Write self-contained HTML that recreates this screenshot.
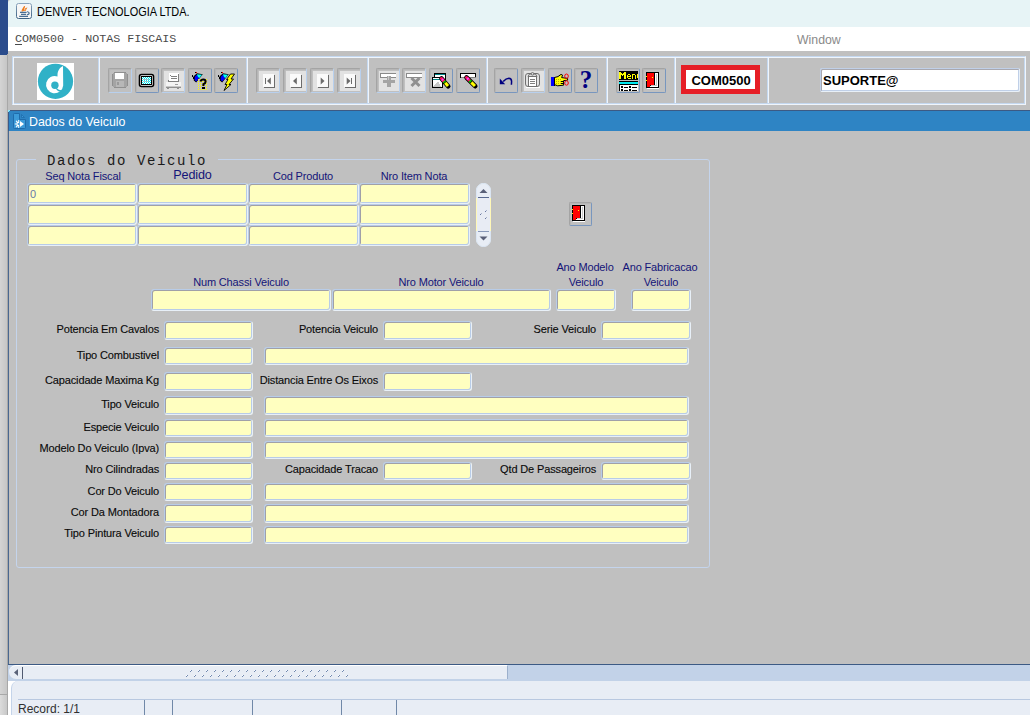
<!DOCTYPE html><html><head><meta charset="utf-8"><title>COM0500</title><style>
*{margin:0;padding:0;box-sizing:content-box}
html,body{width:1030px;height:715px;overflow:hidden;background:#c0c0c0}
body{position:relative;font-family:"Liberation Sans",sans-serif}
.t{position:absolute;white-space:nowrap;line-height:1}
.r{position:absolute}
.f{position:absolute;background:#ffffc0;border:1px solid;border-color:#b8cce8 #e8f0f8 #e8f0f8 #b8cce8;box-shadow:inset 1px 1px 0 #a0a0a8, inset -1px -1px 0 #b8cce8;border-radius:3px}
.b{position:absolute;border:1px solid;border-radius:2px;background:#c0c0c0;box-shadow:inset 1px 1px 0 #b6b6b6}
svg{position:absolute;display:block;overflow:visible}
</style></head><body>
<div class="r" style="left:0px;top:0px;width:8px;height:55px;background:#2b4c8c"></div>
<div class="r" style="left:0px;top:55px;width:7px;height:639px;background:linear-gradient(90deg,#d4d4d4,#c6c6c6)"></div>
<div class="r" style="left:0px;top:694px;width:7px;height:1px;background:#a8a8a8"></div>
<div class="r" style="left:0px;top:695px;width:7px;height:20px;background:linear-gradient(90deg,#dcdcdc,#c8c8c8)"></div>
<div class="r" style="left:7px;top:54px;width:1px;height:661px;background:#a8a8a8"></div>
<div class="r" style="left:8px;top:0px;width:1022px;height:27px;background:#e7f4f6;border-top-left-radius:3px"></div>
<svg style="left:16px;top:3px" width="16" height="16" viewBox="0 0 16 16"><defs><linearGradient id="jg" x1="0" y1="0" x2="0" y2="1"><stop offset="0" stop-color="#8aa4bc"/><stop offset="1" stop-color="#3e6284"/></linearGradient></defs><rect x="0.5" y="0.5" width="15" height="15" rx="2" fill="#f6f6f6" stroke="url(#jg)"/><path d="M6.2 8.6 C5.6 6.8 7.2 5.2 8.6 3.2 C8.4 5 6.8 6.4 7.4 8.2" stroke="#ee7a1a" stroke-width="1.1" fill="none"/><path d="M8.2 8 C8 6.8 9.6 6 10.6 4.8 C10.4 6.2 9.2 6.8 9 8" stroke="#ee7a1a" stroke-width="1" fill="none"/><path d="M4 9.4 H10.6 M5 11.4 H10 M3.2 13.4 H12" stroke="#4a6e92" stroke-width="1.1"/><path d="M11.2 8.6 Q13.6 9.6 13.2 10.6 Q12.6 11.6 10.8 11.8" stroke="#4a6e92" stroke-width="1.1" fill="none"/></svg>
<div class="t" style="left:37px;top:5.84px;font-size:12px;color:#000;font-family:'Liberation Sans', sans-serif;font-weight:normal;transform:scaleX(0.91);transform-origin:0 0">DENVER TECNOLOGIA LTDA.</div>
<div class="r" style="left:8px;top:27px;width:1022px;height:24px;background:#ffffff"></div>
<div class="t" style="left:15px;top:34.03px;font-size:11.7px;color:#4a4a4a;font-family:'Liberation Mono', monospace;font-weight:normal;"><span style="text-decoration:underline;text-underline-offset:2px">C</span>OM0500 - NOTAS FISCAIS</div>
<div class="t" style="left:797px;top:33.89px;font-size:12.3px;color:#8a8a8a;font-family:'Liberation Sans', sans-serif;font-weight:normal;">Window</div>
<div class="r" style="left:8px;top:51px;width:1022px;height:59px;background:#c0c0c0"></div>
<div class="r" style="left:12px;top:56px;width:1012px;height:47px;border:1px solid;border-color:#c4d8f0 #f0f5fb #f0f5fb #c4d8f0;box-shadow:inset 1px 1px 0 #f0f5fb, inset -1px -1px 0 #c4d8f0"></div>
<div class="r" style="left:98px;top:58px;width:1px;height:45px;background:#c4d8f0"></div>
<div class="r" style="left:99px;top:58px;width:1px;height:45px;background:#f0f5fb"></div>
<div class="r" style="left:246px;top:58px;width:1px;height:45px;background:#c4d8f0"></div>
<div class="r" style="left:247px;top:58px;width:1px;height:45px;background:#f0f5fb"></div>
<div class="r" style="left:367px;top:58px;width:1px;height:45px;background:#c4d8f0"></div>
<div class="r" style="left:368px;top:58px;width:1px;height:45px;background:#f0f5fb"></div>
<div class="r" style="left:486px;top:58px;width:1px;height:45px;background:#c4d8f0"></div>
<div class="r" style="left:487px;top:58px;width:1px;height:45px;background:#f0f5fb"></div>
<div class="r" style="left:606px;top:58px;width:1px;height:45px;background:#c4d8f0"></div>
<div class="r" style="left:607px;top:58px;width:1px;height:45px;background:#f0f5fb"></div>
<div class="r" style="left:674px;top:58px;width:1px;height:45px;background:#c4d8f0"></div>
<div class="r" style="left:675px;top:58px;width:1px;height:45px;background:#f0f5fb"></div>
<div class="r" style="left:767px;top:58px;width:1px;height:45px;background:#c4d8f0"></div>
<div class="r" style="left:768px;top:58px;width:1px;height:45px;background:#f0f5fb"></div>
<svg style="left:37px;top:63px" width="37" height="37" viewBox="0 0 37 37"><rect width="37" height="37" fill="#fff"/><circle cx="18.5" cy="18.3" r="17.6" fill="#30b1c7"/><path d="M26 3 C22.5 4.5 20.5 8 20.5 12.5 L20.5 13.6 A8.6 8.6 0 1 0 26.2 22.5 Z" fill="#fff"/><circle cx="17.9" cy="22.2" r="3.7" fill="#30b1c7"/><path d="M19.5 25 Q22 27.5 25 27.2 L23.5 29 Q20.5 28.5 18.5 25.6 Z" fill="#30b1c7"/></svg>
<div class="b" style="left:108px;top:68px;width:22px;height:23px;border-color:#a4a4a4 #b8d0ee #b8d0ee #a4a4a4"></div>
<svg style="left:112px;top:72px" width="16" height="16" viewBox="0 0 16 16" shape-rendering="crispEdges"><rect x="1" y="1" width="14" height="14" fill="#a4a4a4"/><rect x="3" y="1" width="9" height="6" fill="#ffffff"/><rect x="2" y="0" width="12" height="1" fill="#909090"/><rect x="4" y="9" width="8" height="6" fill="#b8b8b8"/><rect x="5" y="10" width="2" height="3" fill="#9a9a9a"/><rect x="0" y="2" width="1" height="12" fill="#909090"/><rect x="15" y="2" width="1" height="12" fill="#909090"/><rect x="2" y="15" width="12" height="1" fill="#909090"/></svg>
<div class="b" style="left:135px;top:68px;width:22px;height:23px;border-color:#a4a4a4 #7896be #7896be #a4a4a4"></div>
<svg style="left:139px;top:72px" width="16" height="16" viewBox="0 0 16 16" shape-rendering="crispEdges"><rect x="0.5" y="2.5" width="14" height="12" rx="2" fill="#fff" stroke="#000" stroke-width="1.6" shape-rendering="auto"/><rect x="2" y="4" width="11" height="9" fill="#000"/><rect x="3" y="5" width="9" height="7" fill="#00e8f0"/><rect x="3" y="5" width="1" height="1" fill="#ffffff"/><rect x="3" y="7" width="1" height="1" fill="#ffffff"/><rect x="3" y="9" width="1" height="1" fill="#ffffff"/><rect x="3" y="11" width="1" height="1" fill="#ffffff"/><rect x="4" y="6" width="1" height="1" fill="#ffffff"/><rect x="4" y="8" width="1" height="1" fill="#ffffff"/><rect x="4" y="10" width="1" height="1" fill="#ffffff"/><rect x="5" y="5" width="1" height="1" fill="#ffffff"/><rect x="5" y="7" width="1" height="1" fill="#ffffff"/><rect x="5" y="9" width="1" height="1" fill="#ffffff"/><rect x="5" y="11" width="1" height="1" fill="#ffffff"/><rect x="6" y="6" width="1" height="1" fill="#ffffff"/><rect x="6" y="8" width="1" height="1" fill="#ffffff"/><rect x="6" y="10" width="1" height="1" fill="#ffffff"/><rect x="7" y="5" width="1" height="1" fill="#ffffff"/><rect x="7" y="7" width="1" height="1" fill="#ffffff"/><rect x="7" y="9" width="1" height="1" fill="#ffffff"/><rect x="7" y="11" width="1" height="1" fill="#ffffff"/><rect x="8" y="6" width="1" height="1" fill="#ffffff"/><rect x="8" y="8" width="1" height="1" fill="#ffffff"/><rect x="8" y="10" width="1" height="1" fill="#ffffff"/><rect x="9" y="5" width="1" height="1" fill="#ffffff"/><rect x="9" y="7" width="1" height="1" fill="#ffffff"/><rect x="9" y="9" width="1" height="1" fill="#ffffff"/><rect x="9" y="11" width="1" height="1" fill="#ffffff"/><rect x="10" y="6" width="1" height="1" fill="#ffffff"/><rect x="10" y="8" width="1" height="1" fill="#ffffff"/><rect x="10" y="10" width="1" height="1" fill="#ffffff"/><rect x="11" y="5" width="1" height="1" fill="#ffffff"/><rect x="11" y="7" width="1" height="1" fill="#ffffff"/><rect x="11" y="9" width="1" height="1" fill="#ffffff"/><rect x="11" y="11" width="1" height="1" fill="#ffffff"/><rect x="4" y="7" width="6" height="1" fill="#a0c8d0"/><rect x="4" y="9" width="6" height="1" fill="#a0c8d0"/></svg>
<div class="b" style="left:161px;top:68px;width:22px;height:23px;border-color:#a4a4a4 #b8d0ee #b8d0ee #a4a4a4"></div>
<div class="r" style="left:164px;top:71px;width:20px;height:20px;background:#e2e2e2"></div>
<svg style="left:165px;top:72px" width="16" height="16" viewBox="0 0 16 16" shape-rendering="crispEdges"><rect x="4" y="1" width="10" height="8" fill="#ffffff"/><rect x="13" y="2" width="1" height="7" fill="#808080"/><rect x="5" y="3" width="1" height="1" fill="#808080"/><rect x="6" y="4" width="6" height="1" fill="#808080"/><rect x="6" y="6" width="6" height="1" fill="#808080"/><rect x="3" y="8" width="1" height="1" fill="#808080"/><rect x="3" y="9" width="11" height="1" fill="#808080"/><rect x="1" y="10" width="15" height="5" fill="#f4f4f4"/><rect x="1" y="14" width="15" height="1" fill="#c8c8c8"/><rect x="1" y="15" width="15" height="1" fill="#909090"/><rect x="2" y="16" width="2" height="1" fill="#909090"/><rect x="12" y="16" width="2" height="1" fill="#909090"/><rect x="10" y="12" width="3" height="1" fill="#a0a0a0"/></svg>
<div class="b" style="left:188px;top:68px;width:22px;height:23px;border-color:#a4a4a4 #7896be #7896be #a4a4a4"></div>
<svg style="left:192px;top:72px" width="16" height="16" viewBox="0 0 16 16" shape-rendering="crispEdges"><path d="M1.6 4.2 L5 1.2 L10.8 2.2 L4.2 10.6 L1.8 8.4 Z" fill="#000" shape-rendering="auto"/><path d="M2.8 4.8 L5 2.4 L5.4 4 L7.2 6.2 L4.2 9.6 L2.6 8 Z" fill="#0000ff" shape-rendering="auto"/><path d="M5 2.2 L10 2.8 L7.2 6.2 L5.4 4 Z" fill="#00ffff" shape-rendering="auto"/><rect x="0" y="3" width="1" height="2" fill="#000"/><rect x="1" y="5" width="1" height="2" fill="#000"/><rect x="3" y="0" width="2" height="1" fill="#000"/><rect x="4" y="0" width="1" height="1" fill="#ff0000"/><rect x="6" y="7" width="1" height="1" fill="#ffff00"/><rect x="6" y="9" width="1" height="1" fill="#ffff00"/><rect x="6" y="11" width="1" height="1" fill="#ffff00"/><rect x="6" y="13" width="1" height="1" fill="#ffff00"/><rect x="6" y="15" width="1" height="1" fill="#ffff00"/><rect x="6" y="17" width="1" height="1" fill="#ffff00"/><rect x="8" y="7" width="1" height="1" fill="#ffff00"/><rect x="8" y="9" width="1" height="1" fill="#ffff00"/><rect x="8" y="11" width="1" height="1" fill="#ffff00"/><rect x="8" y="13" width="1" height="1" fill="#ffff00"/><rect x="8" y="15" width="1" height="1" fill="#ffff00"/><rect x="8" y="17" width="1" height="1" fill="#ffff00"/><rect x="10" y="7" width="1" height="1" fill="#ffff00"/><rect x="10" y="9" width="1" height="1" fill="#ffff00"/><rect x="10" y="11" width="1" height="1" fill="#ffff00"/><rect x="10" y="13" width="1" height="1" fill="#ffff00"/><rect x="10" y="15" width="1" height="1" fill="#ffff00"/><rect x="10" y="17" width="1" height="1" fill="#ffff00"/><rect x="12" y="7" width="1" height="1" fill="#ffff00"/><rect x="12" y="9" width="1" height="1" fill="#ffff00"/><rect x="12" y="11" width="1" height="1" fill="#ffff00"/><rect x="12" y="13" width="1" height="1" fill="#ffff00"/><rect x="12" y="15" width="1" height="1" fill="#ffff00"/><rect x="12" y="17" width="1" height="1" fill="#ffff00"/><rect x="14" y="7" width="1" height="1" fill="#ffff00"/><rect x="14" y="9" width="1" height="1" fill="#ffff00"/><rect x="14" y="11" width="1" height="1" fill="#ffff00"/><rect x="14" y="13" width="1" height="1" fill="#ffff00"/><rect x="14" y="15" width="1" height="1" fill="#ffff00"/><rect x="14" y="17" width="1" height="1" fill="#ffff00"/><path d="M8.5 9.5 Q9 7.6 11.3 7.6 Q13.6 7.6 13.6 9.8 Q13.6 11.4 11.4 12.2 L11.4 14" stroke="#000" stroke-width="2" fill="none" shape-rendering="auto"/><rect x="10" y="15" width="3" height="2" fill="#000"/></svg>
<div class="b" style="left:214px;top:68px;width:22px;height:23px;border-color:#a4a4a4 #7896be #7896be #a4a4a4"></div>
<svg style="left:218px;top:72px" width="16" height="16" viewBox="0 0 16 16" shape-rendering="crispEdges"><path d="M1.6 4.2 L5 1.2 L10.8 2.2 L4.2 10.6 L1.8 8.4 Z" fill="#000" shape-rendering="auto"/><path d="M2.8 4.8 L5 2.4 L5.4 4 L7.2 6.2 L4.2 9.6 L2.6 8 Z" fill="#0000ff" shape-rendering="auto"/><path d="M5 2.2 L10 2.8 L7.2 6.2 L5.4 4 Z" fill="#00ffff" shape-rendering="auto"/><rect x="0" y="3" width="1" height="2" fill="#000"/><rect x="1" y="5" width="1" height="2" fill="#000"/><rect x="3" y="0" width="2" height="1" fill="#000"/><rect x="4" y="0" width="1" height="1" fill="#ff0000"/><path d="M12.5 2 L16.5 2 L13 7 L15.5 7 L11 12.5 L13 12.5 L6 18.5 L9 12.5 L7 12.5 L10 7.5 L8.5 7.5 Z" fill="#ffff00" stroke="#000" stroke-width="0.9" shape-rendering="auto"/></svg>
<div class="b" style="left:256px;top:68px;width:22px;height:23px;border-color:#a4a4a4 #b8d0ee #b8d0ee #a4a4a4"></div>
<div class="r" style="left:259px;top:71px;width:20px;height:20px;background:#e2e2e2"></div>
<svg style="left:260px;top:72px" width="16" height="16" viewBox="0 0 16 16" shape-rendering="crispEdges"><rect x="3" y="2" width="11" height="13" fill="#fafafa"/><rect x="14" y="3" width="1" height="13" fill="#6c6c6c"/><rect x="4" y="15" width="11" height="1" fill="#6c6c6c"/><rect x="5" y="6" width="1" height="6" fill="#6c6c6c"/><path d="M7 9 L10.8 5.6 L10.8 12.4 Z" fill="#6c6c6c" shape-rendering="auto"/></svg>
<div class="b" style="left:283px;top:68px;width:22px;height:23px;border-color:#a4a4a4 #b8d0ee #b8d0ee #a4a4a4"></div>
<div class="r" style="left:286px;top:71px;width:20px;height:20px;background:#e2e2e2"></div>
<svg style="left:287px;top:72px" width="16" height="16" viewBox="0 0 16 16" shape-rendering="crispEdges"><rect x="3" y="2" width="11" height="13" fill="#fafafa"/><rect x="14" y="3" width="1" height="13" fill="#6c6c6c"/><rect x="4" y="15" width="11" height="1" fill="#6c6c6c"/><path d="M6 9 L9.8 5.6 L9.8 12.4 Z" fill="#6c6c6c" shape-rendering="auto"/></svg>
<div class="b" style="left:310px;top:68px;width:22px;height:23px;border-color:#a4a4a4 #b8d0ee #b8d0ee #a4a4a4"></div>
<div class="r" style="left:313px;top:71px;width:20px;height:20px;background:#e2e2e2"></div>
<svg style="left:314px;top:72px" width="16" height="16" viewBox="0 0 16 16" shape-rendering="crispEdges"><rect x="3" y="2" width="11" height="13" fill="#fafafa"/><rect x="14" y="3" width="1" height="13" fill="#6c6c6c"/><rect x="4" y="15" width="11" height="1" fill="#6c6c6c"/><path d="M10.5 9 L6.7 5.6 L6.7 12.4 Z" fill="#6c6c6c" shape-rendering="auto"/></svg>
<div class="b" style="left:337px;top:68px;width:22px;height:23px;border-color:#a4a4a4 #b8d0ee #b8d0ee #a4a4a4"></div>
<div class="r" style="left:340px;top:71px;width:20px;height:20px;background:#e2e2e2"></div>
<svg style="left:341px;top:72px" width="16" height="16" viewBox="0 0 16 16" shape-rendering="crispEdges"><rect x="3" y="2" width="11" height="13" fill="#fafafa"/><rect x="14" y="3" width="1" height="13" fill="#6c6c6c"/><rect x="4" y="15" width="11" height="1" fill="#6c6c6c"/><rect x="10" y="6" width="1" height="6" fill="#6c6c6c"/><path d="M9.5 9 L5.7 5.6 L5.7 12.4 Z" fill="#6c6c6c" shape-rendering="auto"/></svg>
<div class="b" style="left:376px;top:68px;width:22px;height:23px;border-color:#a4a4a4 #b8d0ee #b8d0ee #a4a4a4"></div>
<div class="r" style="left:379px;top:71px;width:20px;height:20px;background:#e2e2e2"></div>
<svg style="left:380px;top:72px" width="16" height="16" viewBox="0 0 16 16" shape-rendering="crispEdges"><rect x="0" y="1" width="16" height="5" fill="#8a8a8a"/><rect x="1" y="2" width="15" height="3" fill="#ffffff"/><rect x="7" y="4" width="4" height="11" fill="#a4a4a4"/><rect x="3" y="8" width="12" height="3" fill="#a4a4a4"/><rect x="8" y="4" width="1" height="4" fill="#c8c8c8"/></svg>
<div class="b" style="left:402px;top:68px;width:22px;height:23px;border-color:#a4a4a4 #b8d0ee #b8d0ee #a4a4a4"></div>
<div class="r" style="left:405px;top:71px;width:20px;height:20px;background:#e2e2e2"></div>
<svg style="left:406px;top:72px" width="16" height="16" viewBox="0 0 16 16" shape-rendering="crispEdges"><rect x="0" y="1" width="16" height="5" fill="#8a8a8a"/><rect x="1" y="2" width="15" height="3" fill="#ffffff"/><path d="M5.5 6 L13.5 14 M13.5 6 L5.5 14" stroke="#909090" stroke-width="3" shape-rendering="auto"/></svg>
<div class="b" style="left:429px;top:68px;width:22px;height:23px;border-color:#a4a4a4 #7896be #7896be #a4a4a4"></div>
<svg style="left:433px;top:72px" width="16" height="16" viewBox="0 0 16 16" shape-rendering="crispEdges"><rect x="1" y="1" width="12" height="11" fill="#000"/><rect x="2" y="2" width="10" height="9" fill="#fff"/><rect x="2" y="2" width="10" height="1" fill="#008888"/><rect x="-1" y="5" width="11" height="11" fill="#000"/><rect x="0" y="6" width="9" height="9" fill="#fff"/><rect x="0" y="7" width="7" height="1" fill="#008888"/><path d="M0 15 L5 9 L8 15 Z" fill="#c8c8c8"/><path d="M8.5 6.5 L15.2 14.2" stroke="#000" stroke-width="4.6" stroke-linecap="round" shape-rendering="auto"/><path d="M8.5 6.5 L10.644 8.964" stroke="#ff1060" stroke-width="3" stroke-linecap="round" shape-rendering="auto"/><path d="M9.036 7.116 L9.974 8.193999999999999" stroke="#ff40ff" stroke-width="2.4" shape-rendering="auto"/><path d="M10.911999999999999 9.272 L11.85 10.35" stroke="#00d000" stroke-width="3" shape-rendering="auto"/><path d="M12.251999999999999 10.812000000000001 L14.998999999999999 13.969" stroke="#ffff00" stroke-width="3" shape-rendering="auto"/></svg>
<div class="b" style="left:456px;top:68px;width:22px;height:23px;border-color:#a4a4a4 #7896be #7896be #a4a4a4"></div>
<svg style="left:460px;top:72px" width="16" height="16" viewBox="0 0 16 16" shape-rendering="crispEdges"><rect x="0" y="1" width="16" height="5" fill="#000"/><rect x="1" y="2" width="14" height="3" fill="#fff"/><rect x="1" y="5" width="15" height="1" fill="#808080"/><path d="M6.5 5.5 L15.2 14.2" stroke="#000" stroke-width="4.6" stroke-linecap="round" shape-rendering="auto"/><path d="M6.5 5.5 L9.283999999999999 8.283999999999999" stroke="#ff1060" stroke-width="3" stroke-linecap="round" shape-rendering="auto"/><path d="M7.196 6.196 L8.414 7.414" stroke="#ff40ff" stroke-width="2.4" shape-rendering="auto"/><path d="M9.632 8.632 L10.85 9.85" stroke="#00d000" stroke-width="3" shape-rendering="auto"/><path d="M11.372 10.372 L14.938999999999998 13.938999999999998" stroke="#ffff00" stroke-width="3" shape-rendering="auto"/></svg>
<div class="b" style="left:494px;top:68px;width:22px;height:23px;border-color:#a4a4a4 #7896be #7896be #a4a4a4"></div>
<svg style="left:498px;top:72px" width="16" height="16" viewBox="0 0 16 16" shape-rendering="crispEdges"><path d="M5.2 9.6 Q8 6.2 10.8 6.2 Q13.6 6.4 13.6 9.4 L13.4 12.8" stroke="#000080" stroke-width="1.5" fill="none" shape-rendering="auto"/><path d="M1.8 6.6 L1.8 12.2 L7.2 12.2 Z" fill="#000080" shape-rendering="auto"/></svg>
<div class="b" style="left:521px;top:68px;width:22px;height:23px;border-color:#a4a4a4 #b8d0ee #b8d0ee #a4a4a4"></div>
<div class="r" style="left:524px;top:71px;width:20px;height:20px;background:#e2e2e2"></div>
<svg style="left:525px;top:72px" width="16" height="16" viewBox="0 0 16 16" shape-rendering="crispEdges"><rect x="0.5" y="1.5" width="14" height="13" rx="2.5" fill="none" stroke="#707070" shape-rendering="auto"/><rect x="3.5" y="4.5" width="8" height="10" fill="#fff" stroke="#707070" shape-rendering="auto"/><path d="M3 4.5 L4.5 2 H10.5 L12 4.5 Z" fill="#dedede" stroke="#707070" shape-rendering="auto"/><circle cx="7.5" cy="1.8" r="1.3" fill="#dedede" stroke="#707070" shape-rendering="auto"/><rect x="5" y="7" width="5" height="1" fill="#808080"/><rect x="5" y="9" width="5" height="1" fill="#808080"/><rect x="5" y="11" width="5" height="1" fill="#808080"/><rect x="1" y="15" width="14" height="1" fill="#ffffff"/></svg>
<div class="b" style="left:548px;top:68px;width:22px;height:23px;border-color:#a4a4a4 #7896be #7896be #a4a4a4"></div>
<svg style="left:552px;top:72px" width="16" height="16" viewBox="0 0 16 16" shape-rendering="crispEdges"><rect x="-1" y="5" width="3" height="9" fill="#0000ff"/><rect x="2" y="5" width="1" height="9" fill="#000"/><path d="M2.5 5.5 L6 4.6 L9 2.4 L10.6 3.2 L9.6 5.6 L15.6 6.4 L15.6 8.2 L11.6 8.6 L11.6 13.2 L5.6 13.8 L2.5 12.6 Z" fill="#ffff00" stroke="#000" stroke-width="1" shape-rendering="auto"/><rect x="8" y="9" width="4" height="1" fill="#000"/><rect x="8" y="11" width="4" height="1" fill="#000"/><rect x="4" y="7" width="1" height="1" fill="#c0b000"/><rect x="4" y="9" width="1" height="1" fill="#c0b000"/><rect x="4" y="11" width="1" height="1" fill="#c0b000"/><rect x="6" y="7" width="1" height="1" fill="#c0b000"/><rect x="6" y="9" width="1" height="1" fill="#c0b000"/><rect x="6" y="11" width="1" height="1" fill="#c0b000"/><rect x="8" y="7" width="1" height="1" fill="#c0b000"/><rect x="8" y="9" width="1" height="1" fill="#c0b000"/><rect x="8" y="11" width="1" height="1" fill="#c0b000"/><ellipse cx="14.5" cy="4.2" rx="1.8" ry="2.2" fill="none" stroke="#ff0000" shape-rendering="auto"/><ellipse cx="14.5" cy="11" rx="1.8" ry="2.2" fill="none" stroke="#ff0000" shape-rendering="auto"/></svg>
<div class="b" style="left:574px;top:68px;width:22px;height:23px;border-color:#a4a4a4 #7896be #7896be #a4a4a4"></div>
<svg style="left:578px;top:72px" width="16" height="16" viewBox="0 0 16 16" shape-rendering="crispEdges"><text x="8" y="16" text-anchor="middle" font-family="Liberation Serif" font-weight="bold" font-size="25" fill="#000080" shape-rendering="auto">?</text></svg>
<div class="b" style="left:616px;top:68px;width:22px;height:23px;border-color:#a4a4a4 #7896be #7896be #a4a4a4"></div>
<svg style="left:620px;top:72px" width="16" height="16" viewBox="0 0 16 16" shape-rendering="crispEdges"><rect x="-1" y="-1" width="19" height="9" fill="#000"/><rect x="-1" y="0" width="1" height="1" fill="#ffff00"/><rect x="0" y="0" width="1" height="1" fill="#ffff00"/><rect x="4" y="0" width="1" height="1" fill="#ffff00"/><rect x="5" y="0" width="1" height="1" fill="#ffff00"/><rect x="-1" y="1" width="1" height="1" fill="#ffff00"/><rect x="0" y="1" width="1" height="1" fill="#ffff00"/><rect x="1" y="1" width="1" height="1" fill="#ffff00"/><rect x="3" y="1" width="1" height="1" fill="#ffff00"/><rect x="4" y="1" width="1" height="1" fill="#ffff00"/><rect x="5" y="1" width="1" height="1" fill="#ffff00"/><rect x="-1" y="2" width="1" height="1" fill="#ffff00"/><rect x="0" y="2" width="1" height="1" fill="#ffff00"/><rect x="1" y="2" width="1" height="1" fill="#ffff00"/><rect x="2" y="2" width="1" height="1" fill="#ffff00"/><rect x="3" y="2" width="1" height="1" fill="#ffff00"/><rect x="4" y="2" width="1" height="1" fill="#ffff00"/><rect x="5" y="2" width="1" height="1" fill="#ffff00"/><rect x="-1" y="3" width="1" height="1" fill="#ffff00"/><rect x="0" y="3" width="1" height="1" fill="#ffff00"/><rect x="2" y="3" width="1" height="1" fill="#ffff00"/><rect x="4" y="3" width="1" height="1" fill="#ffff00"/><rect x="5" y="3" width="1" height="1" fill="#ffff00"/><rect x="-1" y="4" width="1" height="1" fill="#ffff00"/><rect x="0" y="4" width="1" height="1" fill="#ffff00"/><rect x="4" y="4" width="1" height="1" fill="#ffff00"/><rect x="5" y="4" width="1" height="1" fill="#ffff00"/><rect x="-1" y="5" width="1" height="1" fill="#ffff00"/><rect x="0" y="5" width="1" height="1" fill="#ffff00"/><rect x="4" y="5" width="1" height="1" fill="#ffff00"/><rect x="5" y="5" width="1" height="1" fill="#ffff00"/><rect x="-1" y="6" width="1" height="1" fill="#ffff00"/><rect x="0" y="6" width="1" height="1" fill="#ffff00"/><rect x="4" y="6" width="1" height="1" fill="#ffff00"/><rect x="5" y="6" width="1" height="1" fill="#ffff00"/><rect x="8" y="2" width="1" height="1" fill="#ffff00"/><rect x="9" y="2" width="1" height="1" fill="#ffff00"/><rect x="7" y="3" width="1" height="1" fill="#ffff00"/><rect x="10" y="3" width="1" height="1" fill="#ffff00"/><rect x="7" y="4" width="1" height="1" fill="#ffff00"/><rect x="8" y="4" width="1" height="1" fill="#ffff00"/><rect x="9" y="4" width="1" height="1" fill="#ffff00"/><rect x="10" y="4" width="1" height="1" fill="#ffff00"/><rect x="7" y="5" width="1" height="1" fill="#ffff00"/><rect x="8" y="6" width="1" height="1" fill="#ffff00"/><rect x="9" y="6" width="1" height="1" fill="#ffff00"/><rect x="10" y="6" width="1" height="1" fill="#ffff00"/><rect x="12" y="2" width="1" height="1" fill="#ffff00"/><rect x="13" y="2" width="1" height="1" fill="#ffff00"/><rect x="14" y="2" width="1" height="1" fill="#ffff00"/><rect x="12" y="3" width="1" height="1" fill="#ffff00"/><rect x="15" y="3" width="1" height="1" fill="#ffff00"/><rect x="12" y="4" width="1" height="1" fill="#ffff00"/><rect x="15" y="4" width="1" height="1" fill="#ffff00"/><rect x="12" y="5" width="1" height="1" fill="#ffff00"/><rect x="15" y="5" width="1" height="1" fill="#ffff00"/><rect x="12" y="6" width="1" height="1" fill="#ffff00"/><rect x="15" y="6" width="1" height="1" fill="#ffff00"/><rect x="17" y="2" width="1" height="1" fill="#ffff00"/><rect x="17" y="3" width="1" height="1" fill="#ffff00"/><rect x="17" y="4" width="1" height="1" fill="#ffff00"/><rect x="17" y="5" width="1" height="1" fill="#ffff00"/><rect x="-1" y="9" width="19" height="1" fill="#000"/><rect x="-1" y="10" width="19" height="2" fill="#00e8f0"/><rect x="-1" y="12" width="19" height="7" fill="#000"/><rect x="0" y="13" width="18" height="6" fill="#fff"/><rect x="1" y="14" width="2" height="2" fill="#000"/><rect x="4" y="15" width="4" height="1" fill="#000"/><rect x="9" y="14" width="2" height="2" fill="#000"/><rect x="12" y="15" width="5" height="1" fill="#000"/><rect x="1" y="17" width="2" height="2" fill="#000"/><rect x="4" y="18" width="4" height="1" fill="#000"/><rect x="9" y="17" width="2" height="2" fill="#000"/><rect x="12" y="18" width="5" height="1" fill="#000"/></svg>
<div class="b" style="left:642px;top:68px;width:22px;height:23px;border-color:#a4a4a4 #7896be #7896be #a4a4a4"></div>
<svg style="left:646px;top:72px" width="16" height="16" viewBox="0 0 16 16" shape-rendering="crispEdges"><rect x="0" y="0" width="13" height="16" fill="#000"/><rect x="1" y="1" width="7" height="12" fill="#ff0000"/><rect x="1" y="13" width="3" height="2" fill="#ff0000"/><rect x="9" y="1" width="3" height="14" fill="#ffffff"/><rect x="10" y="2" width="1" height="11" fill="#c8c8c8"/><rect x="5" y="13" width="6" height="1" fill="#c8c8c8"/><rect x="4" y="14" width="8" height="1" fill="#ffffff"/><rect x="6" y="5" width="1" height="1" fill="#ffff00"/><rect x="0" y="4" width="1" height="1" fill="#ffff00"/><rect x="0" y="8" width="1" height="1" fill="#ffff00"/><rect x="1" y="16" width="12" height="1" fill="#ffffff"/></svg>
<div class="r" style="left:681px;top:65px;width:69px;height:19px;border:5px solid #e61e26;background:#fff"></div>
<div class="t" style="left:571px;width:300px;top:74.00px;font-size:13px;color:#000;font-family:'Liberation Sans', sans-serif;font-weight:bold;text-align:center;">COM0500</div>
<div class="r" style="left:820px;top:68px;width:198px;height:22px;background:#fff;border:1px solid;border-color:#c0d0e8 #e8f0f8 #e8f0f8 #c0d0e8;border-radius:2px;box-shadow:inset 1px 1px 0 #a8a8b0, inset -1px -1px 0 #c0d0e8"></div>
<div class="t" style="left:823px;top:74.00px;font-size:13px;color:#000;font-family:'Liberation Sans', sans-serif;font-weight:bold;">SUPORTE@</div>
<div class="r" style="left:8px;top:110px;width:1022px;height:1px;background:#3c5a84"></div>
<div class="r" style="left:8px;top:111px;width:1022px;height:20px;background:#2e84c4"></div>
<div class="t" style="left:29px;top:115.80px;font-size:12.4px;color:#fff;font-family:'Liberation Sans', sans-serif;font-weight:normal;">Dados do Veiculo</div>
<svg style="left:13px;top:113px" width="14" height="16" viewBox="0 0 14 16"><path d="M1.5 0.5 H6.5 V6.5 H12.5 V14.5 Q12.5 15.5 11.5 15.5 H1.5 Q0.5 15.5 0.5 14.5 V1.5 Q0.5 0.5 1.5 0.5 Z" fill="#3c9ad8" stroke="#1f6cac"/><path d="M8.5 1.5 L11.5 4.5 H8.5 Z" fill="#3c9ad8" stroke="#1f6cac" stroke-width="0.8"/><path d="M6.2 8.2 A2.8 2.8 0 0 0 6.2 13.8 Z" fill="#fff"/><path d="M5.2 7 H6.2 V8.6 H5.2 Z M5.2 13.4 H6.2 V15 H5.2 Z M1.8 10.4 H3.6 V11.6 H1.8 Z M2.6 8 L3.6 7.4 L4.6 8.8 L3.8 9.6 Z M2.6 14 L3.6 14.6 L4.6 13.2 L3.8 12.4 Z" fill="#fff"/><circle cx="5.4" cy="11" r="0.9" fill="#3c9ad8"/><path d="M7 8 L11 11 L7 14 Z" fill="#fff"/></svg>
<div class="r" style="left:8px;top:111px;width:1px;height:20px;background:#3a5a8a"></div>
<div class="r" style="left:8px;top:110px;width:2px;height:1px;background:#8ee8f8"></div>
<div class="r" style="left:8px;top:111px;width:1px;height:1px;background:#8ee8f8"></div>
<div class="r" style="left:8px;top:131px;width:1px;height:533px;background:#4a6890"></div>
<div class="r" style="left:16px;top:159px;width:692px;height:407px;border:1px solid #c4d4ec;border-radius:3px"></div>
<div class="r" style="left:36px;top:150px;width:182px;height:14px;background:#c0c0c0"></div>
<div class="t" style="left:47px;top:154.27px;font-size:14px;color:#1a1a1a;font-family:'Liberation Mono', monospace;font-weight:normal;letter-spacing:1.6px">Dados do Veiculo</div>
<div class="t" style="left:-67px;width:300px;top:170.69px;font-size:11px;color:#141478;font-family:'Liberation Sans', sans-serif;font-weight:normal;text-align:center;letter-spacing:-0.15px">Seq Nota Fiscal</div>
<div class="t" style="left:42.5px;width:300px;top:169.33px;font-size:12.6px;color:#141478;font-family:'Liberation Sans', sans-serif;font-weight:normal;text-align:center;letter-spacing:-0.15px">Pedido</div>
<div class="t" style="left:153px;width:300px;top:170.69px;font-size:11px;color:#141478;font-family:'Liberation Sans', sans-serif;font-weight:normal;text-align:center;letter-spacing:-0.15px">Cod Produto</div>
<div class="t" style="left:264px;width:300px;top:170.69px;font-size:11px;color:#141478;font-family:'Liberation Sans', sans-serif;font-weight:normal;text-align:center;letter-spacing:-0.15px">Nro Item Nota</div>
<div class="f" style="left:27px;top:183px;width:108px;height:19px"></div>
<div class="f" style="left:137px;top:183px;width:109px;height:19px"></div>
<div class="f" style="left:248px;top:183px;width:109px;height:19px"></div>
<div class="f" style="left:359px;top:183px;width:109px;height:19px"></div>
<div class="f" style="left:27px;top:204px;width:108px;height:19px"></div>
<div class="f" style="left:137px;top:204px;width:109px;height:19px"></div>
<div class="f" style="left:248px;top:204px;width:109px;height:19px"></div>
<div class="f" style="left:359px;top:204px;width:109px;height:19px"></div>
<div class="f" style="left:27px;top:225px;width:108px;height:19px"></div>
<div class="f" style="left:137px;top:225px;width:109px;height:19px"></div>
<div class="f" style="left:248px;top:225px;width:109px;height:19px"></div>
<div class="f" style="left:359px;top:225px;width:109px;height:19px"></div>
<div class="t" style="left:30px;top:188.69px;font-size:11px;color:#6878a8;font-family:'Liberation Sans', sans-serif;font-weight:normal;">0</div>
<svg style="left:476px;top:183px" width="15" height="64" viewBox="0 0 15 64"><rect x="0.5" y="0.5" width="14" height="63" rx="7" fill="#e8edf5" stroke="#f4f8fc"/><rect x="0.5" y="0.5" width="14" height="63" rx="7" fill="none" stroke="#c8d8ec" stroke-width="0.6"/><rect x="0" y="15" width="1" height="33" fill="#fff8b8"/><rect x="14" y="15" width="1" height="33" fill="#fff8b8"/><rect x="1" y="14" width="13" height="34" fill="#e8ecf4"/><rect x="2" y="14" width="11" height="1" fill="#5a6a90"/><rect x="2" y="48" width="11" height="1" fill="#8898b8"/><path d="M3.5 10 L7.5 6 L11.5 10 Z" fill="#5a6078"/><path d="M3.5 53.5 L7.5 57.5 L11.5 53.5 Z" fill="#5a6078"/><path d="M9 29 L10.5 27.5 M4 32 L5.5 30.5 M9 36 L10.5 34.5" stroke="#6878a0" stroke-width="1"/></svg>
<div class="b" style="left:569px;top:202px;width:21px;height:22px;border-color:#a4a4a4 #7896be #7896be #a4a4a4"></div>
<svg style="left:572px;top:205px" width="16" height="16" viewBox="0 0 16 16" shape-rendering="crispEdges"><rect x="0" y="0" width="13" height="16" fill="#000"/><rect x="1" y="1" width="7" height="12" fill="#ff0000"/><rect x="1" y="13" width="3" height="2" fill="#ff0000"/><rect x="9" y="1" width="3" height="14" fill="#ffffff"/><rect x="10" y="2" width="1" height="11" fill="#c8c8c8"/><rect x="5" y="13" width="6" height="1" fill="#c8c8c8"/><rect x="4" y="14" width="8" height="1" fill="#ffffff"/><rect x="6" y="5" width="1" height="1" fill="#ffff00"/><rect x="0" y="4" width="1" height="1" fill="#ffff00"/><rect x="0" y="8" width="1" height="1" fill="#ffff00"/><rect x="1" y="16" width="12" height="1" fill="#ffffff"/></svg>
<div class="t" style="left:91px;width:300px;top:276.69px;font-size:11px;color:#141478;font-family:'Liberation Sans', sans-serif;font-weight:normal;text-align:center;letter-spacing:-0.15px">Num Chassi Veiculo</div>
<div class="t" style="left:291px;width:300px;top:276.69px;font-size:11px;color:#141478;font-family:'Liberation Sans', sans-serif;font-weight:normal;text-align:center;letter-spacing:-0.15px">Nro Motor Veiculo</div>
<div class="t" style="left:435px;width:300px;top:261.69px;font-size:11px;color:#141478;font-family:'Liberation Sans', sans-serif;font-weight:normal;text-align:center;letter-spacing:-0.15px">Ano Modelo</div>
<div class="t" style="left:436px;width:300px;top:276.69px;font-size:11px;color:#141478;font-family:'Liberation Sans', sans-serif;font-weight:normal;text-align:center;letter-spacing:-0.15px">Veiculo</div>
<div class="t" style="left:510px;width:300px;top:261.69px;font-size:11px;color:#141478;font-family:'Liberation Sans', sans-serif;font-weight:normal;text-align:center;letter-spacing:-0.15px">Ano Fabricacao</div>
<div class="t" style="left:511px;width:300px;top:276.69px;font-size:11px;color:#141478;font-family:'Liberation Sans', sans-serif;font-weight:normal;text-align:center;letter-spacing:-0.15px">Veiculo</div>
<div class="f" style="left:151px;top:289px;width:178px;height:20px"></div>
<div class="f" style="left:332px;top:289px;width:217px;height:20px"></div>
<div class="f" style="left:556px;top:289px;width:58px;height:20px"></div>
<div class="f" style="left:631px;top:289px;width:58px;height:20px"></div>
<div class="t" style="right:871px;top:323.69px;font-size:11px;color:#0a0a0a;font-family:'Liberation Sans', sans-serif;font-weight:normal;text-align:right;letter-spacing:-0.14px;-webkit-text-stroke:0.12px #0a0a0a">Potencia Em Cavalos</div>
<div class="f" style="left:164px;top:321px;width:87px;height:17px"></div>
<div class="t" style="right:871px;top:349.69px;font-size:11px;color:#0a0a0a;font-family:'Liberation Sans', sans-serif;font-weight:normal;text-align:right;letter-spacing:-0.14px;-webkit-text-stroke:0.12px #0a0a0a">Tipo Combustivel</div>
<div class="f" style="left:164px;top:347px;width:87px;height:16px"></div>
<div class="t" style="right:871px;top:374.69px;font-size:11px;color:#0a0a0a;font-family:'Liberation Sans', sans-serif;font-weight:normal;text-align:right;letter-spacing:-0.14px;-webkit-text-stroke:0.12px #0a0a0a">Capacidade Maxima Kg</div>
<div class="f" style="left:164px;top:372px;width:87px;height:17px"></div>
<div class="t" style="right:871px;top:398.69px;font-size:11px;color:#0a0a0a;font-family:'Liberation Sans', sans-serif;font-weight:normal;text-align:right;letter-spacing:-0.14px;-webkit-text-stroke:0.12px #0a0a0a">Tipo Veiculo</div>
<div class="f" style="left:164px;top:396px;width:87px;height:17px"></div>
<div class="t" style="right:871px;top:421.69px;font-size:11px;color:#0a0a0a;font-family:'Liberation Sans', sans-serif;font-weight:normal;text-align:right;letter-spacing:-0.14px;-webkit-text-stroke:0.12px #0a0a0a">Especie Veiculo</div>
<div class="f" style="left:164px;top:419px;width:87px;height:16px"></div>
<div class="t" style="right:871px;top:442.69px;font-size:11px;color:#0a0a0a;font-family:'Liberation Sans', sans-serif;font-weight:normal;text-align:right;letter-spacing:-0.14px;-webkit-text-stroke:0.12px #0a0a0a">Modelo Do Veiculo (Ipva)</div>
<div class="f" style="left:164px;top:441px;width:87px;height:16px"></div>
<div class="t" style="right:871px;top:463.69px;font-size:11px;color:#0a0a0a;font-family:'Liberation Sans', sans-serif;font-weight:normal;text-align:right;letter-spacing:-0.14px;-webkit-text-stroke:0.12px #0a0a0a">Nro Cilindradas</div>
<div class="f" style="left:164px;top:462px;width:87px;height:16px"></div>
<div class="t" style="right:871px;top:485.69px;font-size:11px;color:#0a0a0a;font-family:'Liberation Sans', sans-serif;font-weight:normal;text-align:right;letter-spacing:-0.14px;-webkit-text-stroke:0.12px #0a0a0a">Cor Do Veiculo</div>
<div class="f" style="left:164px;top:483px;width:87px;height:16px"></div>
<div class="t" style="right:871px;top:506.69px;font-size:11px;color:#0a0a0a;font-family:'Liberation Sans', sans-serif;font-weight:normal;text-align:right;letter-spacing:-0.14px;-webkit-text-stroke:0.12px #0a0a0a">Cor Da Montadora</div>
<div class="f" style="left:164px;top:504px;width:87px;height:17px"></div>
<div class="t" style="right:871px;top:527.69px;font-size:11px;color:#0a0a0a;font-family:'Liberation Sans', sans-serif;font-weight:normal;text-align:right;letter-spacing:-0.14px;-webkit-text-stroke:0.12px #0a0a0a">Tipo Pintura Veiculo</div>
<div class="f" style="left:164px;top:526px;width:87px;height:16px"></div>
<div class="t" style="right:652px;top:323.69px;font-size:11px;color:#0a0a0a;font-family:'Liberation Sans', sans-serif;font-weight:normal;text-align:right;letter-spacing:-0.14px;-webkit-text-stroke:0.12px #0a0a0a">Potencia Veiculo</div>
<div class="f" style="left:383px;top:321px;width:87px;height:17px"></div>
<div class="t" style="right:434px;top:323.69px;font-size:11px;color:#0a0a0a;font-family:'Liberation Sans', sans-serif;font-weight:normal;text-align:right;letter-spacing:-0.14px;-webkit-text-stroke:0.12px #0a0a0a">Serie Veiculo</div>
<div class="f" style="left:601px;top:321px;width:88px;height:17px"></div>
<div class="t" style="right:652px;top:374.69px;font-size:11px;color:#0a0a0a;font-family:'Liberation Sans', sans-serif;font-weight:normal;text-align:right;letter-spacing:-0.14px;-webkit-text-stroke:0.12px #0a0a0a">Distancia Entre Os Eixos</div>
<div class="f" style="left:383px;top:372px;width:87px;height:17px"></div>
<div class="t" style="right:652px;top:463.69px;font-size:11px;color:#0a0a0a;font-family:'Liberation Sans', sans-serif;font-weight:normal;text-align:right;letter-spacing:-0.14px;-webkit-text-stroke:0.12px #0a0a0a">Capacidade Tracao</div>
<div class="f" style="left:383px;top:462px;width:87px;height:16px"></div>
<div class="t" style="right:434px;top:463.69px;font-size:11px;color:#0a0a0a;font-family:'Liberation Sans', sans-serif;font-weight:normal;text-align:right;letter-spacing:-0.14px;-webkit-text-stroke:0.12px #0a0a0a">Qtd De Passageiros</div>
<div class="f" style="left:601px;top:462px;width:88px;height:16px"></div>
<div class="f" style="left:264px;top:347px;width:423px;height:16px"></div>
<div class="f" style="left:264px;top:396px;width:423px;height:17px"></div>
<div class="f" style="left:264px;top:419px;width:423px;height:16px"></div>
<div class="f" style="left:264px;top:441px;width:423px;height:16px"></div>
<div class="f" style="left:264px;top:483px;width:423px;height:16px"></div>
<div class="f" style="left:264px;top:504px;width:423px;height:17px"></div>
<div class="f" style="left:264px;top:526px;width:423px;height:16px"></div>
<div class="r" style="left:8px;top:664px;width:1022px;height:1px;background:#3c5a84"></div>
<div class="r" style="left:8px;top:665px;width:1022px;height:16px;background:#c2d2e8"></div>
<div class="r" style="left:9px;top:665px;width:498px;height:13px;background:#e8edf5;border-top:1px solid #fff;border-radius:7px 0 0 7px"></div>
<div class="r" style="left:507px;top:666px;width:1px;height:13px;background:#9cb0cc"></div>
<svg style="left:13px;top:668px" width="8" height="9"><path d="M1 4.5 L5 1 V8 Z" fill="#5a6278"/></svg>
<div class="r" style="left:22px;top:667px;width:1px;height:12px;background:#505a70"></div>
<svg style="left:186px;top:670px" width="170" height="8" shape-rendering="crispEdges"><rect x="4" y="0" width="1" height="1" fill="#ffffff"/><rect x="5" y="0" width="1" height="1" fill="#7088b0"/><rect x="4" y="1" width="1" height="1" fill="#7088b0"/><rect x="0" y="5" width="1" height="1" fill="#ffffff"/><rect x="1" y="5" width="1" height="1" fill="#7088b0"/><rect x="0" y="6" width="1" height="1" fill="#7088b0"/><rect x="12" y="0" width="1" height="1" fill="#ffffff"/><rect x="13" y="0" width="1" height="1" fill="#7088b0"/><rect x="12" y="1" width="1" height="1" fill="#7088b0"/><rect x="8" y="5" width="1" height="1" fill="#ffffff"/><rect x="9" y="5" width="1" height="1" fill="#7088b0"/><rect x="8" y="6" width="1" height="1" fill="#7088b0"/><rect x="20" y="0" width="1" height="1" fill="#ffffff"/><rect x="21" y="0" width="1" height="1" fill="#7088b0"/><rect x="20" y="1" width="1" height="1" fill="#7088b0"/><rect x="16" y="5" width="1" height="1" fill="#ffffff"/><rect x="17" y="5" width="1" height="1" fill="#7088b0"/><rect x="16" y="6" width="1" height="1" fill="#7088b0"/><rect x="28" y="0" width="1" height="1" fill="#ffffff"/><rect x="29" y="0" width="1" height="1" fill="#7088b0"/><rect x="28" y="1" width="1" height="1" fill="#7088b0"/><rect x="24" y="5" width="1" height="1" fill="#ffffff"/><rect x="25" y="5" width="1" height="1" fill="#7088b0"/><rect x="24" y="6" width="1" height="1" fill="#7088b0"/><rect x="36" y="0" width="1" height="1" fill="#ffffff"/><rect x="37" y="0" width="1" height="1" fill="#7088b0"/><rect x="36" y="1" width="1" height="1" fill="#7088b0"/><rect x="32" y="5" width="1" height="1" fill="#ffffff"/><rect x="33" y="5" width="1" height="1" fill="#7088b0"/><rect x="32" y="6" width="1" height="1" fill="#7088b0"/><rect x="44" y="0" width="1" height="1" fill="#ffffff"/><rect x="45" y="0" width="1" height="1" fill="#7088b0"/><rect x="44" y="1" width="1" height="1" fill="#7088b0"/><rect x="40" y="5" width="1" height="1" fill="#ffffff"/><rect x="41" y="5" width="1" height="1" fill="#7088b0"/><rect x="40" y="6" width="1" height="1" fill="#7088b0"/><rect x="52" y="0" width="1" height="1" fill="#ffffff"/><rect x="53" y="0" width="1" height="1" fill="#7088b0"/><rect x="52" y="1" width="1" height="1" fill="#7088b0"/><rect x="48" y="5" width="1" height="1" fill="#ffffff"/><rect x="49" y="5" width="1" height="1" fill="#7088b0"/><rect x="48" y="6" width="1" height="1" fill="#7088b0"/><rect x="60" y="0" width="1" height="1" fill="#ffffff"/><rect x="61" y="0" width="1" height="1" fill="#7088b0"/><rect x="60" y="1" width="1" height="1" fill="#7088b0"/><rect x="56" y="5" width="1" height="1" fill="#ffffff"/><rect x="57" y="5" width="1" height="1" fill="#7088b0"/><rect x="56" y="6" width="1" height="1" fill="#7088b0"/><rect x="68" y="0" width="1" height="1" fill="#ffffff"/><rect x="69" y="0" width="1" height="1" fill="#7088b0"/><rect x="68" y="1" width="1" height="1" fill="#7088b0"/><rect x="64" y="5" width="1" height="1" fill="#ffffff"/><rect x="65" y="5" width="1" height="1" fill="#7088b0"/><rect x="64" y="6" width="1" height="1" fill="#7088b0"/><rect x="76" y="0" width="1" height="1" fill="#ffffff"/><rect x="77" y="0" width="1" height="1" fill="#7088b0"/><rect x="76" y="1" width="1" height="1" fill="#7088b0"/><rect x="72" y="5" width="1" height="1" fill="#ffffff"/><rect x="73" y="5" width="1" height="1" fill="#7088b0"/><rect x="72" y="6" width="1" height="1" fill="#7088b0"/><rect x="84" y="0" width="1" height="1" fill="#ffffff"/><rect x="85" y="0" width="1" height="1" fill="#7088b0"/><rect x="84" y="1" width="1" height="1" fill="#7088b0"/><rect x="80" y="5" width="1" height="1" fill="#ffffff"/><rect x="81" y="5" width="1" height="1" fill="#7088b0"/><rect x="80" y="6" width="1" height="1" fill="#7088b0"/><rect x="92" y="0" width="1" height="1" fill="#ffffff"/><rect x="93" y="0" width="1" height="1" fill="#7088b0"/><rect x="92" y="1" width="1" height="1" fill="#7088b0"/><rect x="88" y="5" width="1" height="1" fill="#ffffff"/><rect x="89" y="5" width="1" height="1" fill="#7088b0"/><rect x="88" y="6" width="1" height="1" fill="#7088b0"/><rect x="100" y="0" width="1" height="1" fill="#ffffff"/><rect x="101" y="0" width="1" height="1" fill="#7088b0"/><rect x="100" y="1" width="1" height="1" fill="#7088b0"/><rect x="96" y="5" width="1" height="1" fill="#ffffff"/><rect x="97" y="5" width="1" height="1" fill="#7088b0"/><rect x="96" y="6" width="1" height="1" fill="#7088b0"/><rect x="108" y="0" width="1" height="1" fill="#ffffff"/><rect x="109" y="0" width="1" height="1" fill="#7088b0"/><rect x="108" y="1" width="1" height="1" fill="#7088b0"/><rect x="104" y="5" width="1" height="1" fill="#ffffff"/><rect x="105" y="5" width="1" height="1" fill="#7088b0"/><rect x="104" y="6" width="1" height="1" fill="#7088b0"/><rect x="116" y="0" width="1" height="1" fill="#ffffff"/><rect x="117" y="0" width="1" height="1" fill="#7088b0"/><rect x="116" y="1" width="1" height="1" fill="#7088b0"/><rect x="112" y="5" width="1" height="1" fill="#ffffff"/><rect x="113" y="5" width="1" height="1" fill="#7088b0"/><rect x="112" y="6" width="1" height="1" fill="#7088b0"/><rect x="124" y="0" width="1" height="1" fill="#ffffff"/><rect x="125" y="0" width="1" height="1" fill="#7088b0"/><rect x="124" y="1" width="1" height="1" fill="#7088b0"/><rect x="120" y="5" width="1" height="1" fill="#ffffff"/><rect x="121" y="5" width="1" height="1" fill="#7088b0"/><rect x="120" y="6" width="1" height="1" fill="#7088b0"/><rect x="132" y="0" width="1" height="1" fill="#ffffff"/><rect x="133" y="0" width="1" height="1" fill="#7088b0"/><rect x="132" y="1" width="1" height="1" fill="#7088b0"/><rect x="128" y="5" width="1" height="1" fill="#ffffff"/><rect x="129" y="5" width="1" height="1" fill="#7088b0"/><rect x="128" y="6" width="1" height="1" fill="#7088b0"/><rect x="140" y="0" width="1" height="1" fill="#ffffff"/><rect x="141" y="0" width="1" height="1" fill="#7088b0"/><rect x="140" y="1" width="1" height="1" fill="#7088b0"/><rect x="136" y="5" width="1" height="1" fill="#ffffff"/><rect x="137" y="5" width="1" height="1" fill="#7088b0"/><rect x="136" y="6" width="1" height="1" fill="#7088b0"/><rect x="148" y="0" width="1" height="1" fill="#ffffff"/><rect x="149" y="0" width="1" height="1" fill="#7088b0"/><rect x="148" y="1" width="1" height="1" fill="#7088b0"/><rect x="144" y="5" width="1" height="1" fill="#ffffff"/><rect x="145" y="5" width="1" height="1" fill="#7088b0"/><rect x="144" y="6" width="1" height="1" fill="#7088b0"/><rect x="156" y="0" width="1" height="1" fill="#ffffff"/><rect x="157" y="0" width="1" height="1" fill="#7088b0"/><rect x="156" y="1" width="1" height="1" fill="#7088b0"/><rect x="152" y="5" width="1" height="1" fill="#ffffff"/><rect x="153" y="5" width="1" height="1" fill="#7088b0"/><rect x="152" y="6" width="1" height="1" fill="#7088b0"/><rect x="160" y="5" width="1" height="1" fill="#ffffff"/><rect x="161" y="5" width="1" height="1" fill="#7088b0"/><rect x="160" y="6" width="1" height="1" fill="#7088b0"/></svg>
<div class="r" style="left:8px;top:681px;width:1022px;height:34px;background:#ffffff"></div>
<div class="r" style="left:11px;top:681px;width:1019px;height:34px;background:#e8edf5;border-left:1px solid #c4d4ea;border-top-left-radius:7px"></div>
<div class="r" style="left:18px;top:699px;width:1012px;height:1px;background:#b8c8e0"></div>
<div class="r" style="left:144px;top:700px;width:1px;height:15px;background:#7088a8"></div>
<div class="r" style="left:172px;top:700px;width:1px;height:15px;background:#7088a8"></div>
<div class="r" style="left:252px;top:700px;width:1px;height:15px;background:#7088a8"></div>
<div class="r" style="left:341px;top:700px;width:1px;height:15px;background:#7088a8"></div>
<div class="r" style="left:396px;top:700px;width:1px;height:15px;background:#7088a8"></div>
<div class="t" style="left:18px;top:702.84px;font-size:12px;color:#303030;font-family:'Liberation Sans', sans-serif;font-weight:normal;">Record: 1/1</div>
</body></html>
